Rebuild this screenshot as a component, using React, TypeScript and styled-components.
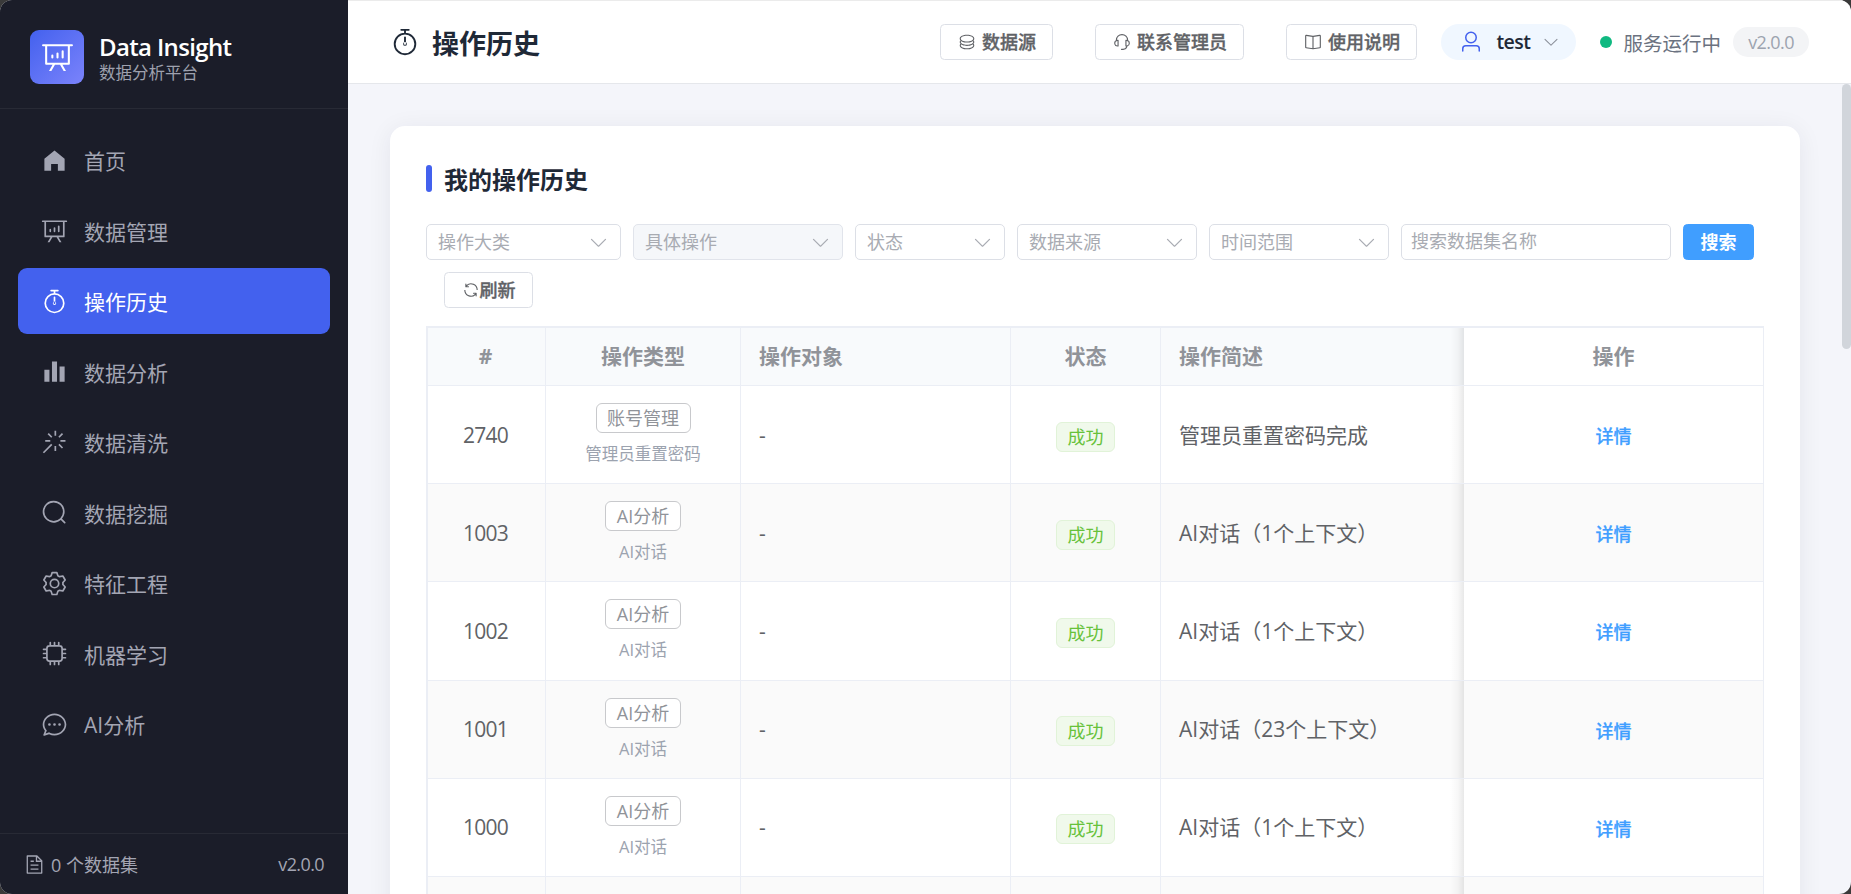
import React from "react";
import styled, { createGlobalStyle, css } from "styled-components";

const GlobalStyle = createGlobalStyle`
  * { box-sizing: border-box; }
  body {
    margin: 0;
    background: #3a3a3a;
    font-family: "Open Sans", "Noto Sans CJK SC", sans-serif;
    -webkit-font-smoothing: antialiased;
  }
  button, input { font-family: inherit; }
`;

/* ---------- icons ---------- */

const paths = {
  home: "M512 128 128 447.936V896h255.936V640H640v256h255.936V447.936z",
  board:
    "m665.216 768 110.848 192h-73.856L591.36 768H433.024L322.176 960H248.32l110.848-192H160a32 32 0 0 1-32-32V192H64a32 32 0 0 1 0-64h896a32 32 0 1 1 0 64h-64v544a32 32 0 0 1-32 32zM832 192H192v512h640zM352 448a32 32 0 0 1 32 32v64a32 32 0 0 1-64 0v-64a32 32 0 0 1 32-32m160-64a32 32 0 0 1 32 32v128a32 32 0 0 1-64 0V416a32 32 0 0 1 32-32m160-64a32 32 0 0 1 32 32v192a32 32 0 1 1-64 0V352a32 32 0 0 1 32-32",
  timer:
    "M512 896a320 320 0 1 0 0-640 320 320 0 0 0 0 640m0 64a384 384 0 1 1 0-768 384 384 0 0 1 0 768M512 320a32 32 0 0 1 32 32l-.512 224a32 32 0 1 1-64 0L480 352a32 32 0 0 1 32-32M448 576a64 64 0 1 0 128 0 64 64 0 1 0-128 0m96-448v128h-64V128h-96a32 32 0 0 1 0-64h256a32 32 0 1 1 0 64z",
  bars: "M416 896V128h192v768zm-288 0V448h192v448zm576 0V320h192v576z",
  magic:
    "M512 64h64v192h-64zm0 576h64v192h-64zM160 480v-64h192v64zm576 0v-64h192v64zM249.856 199.04l45.248-45.184L430.848 289.6 385.6 334.848 249.856 199.104zM657.152 606.4l45.248-45.248 135.744 135.744-45.248 45.248zM114.048 923.2 68.8 877.952l316.8-316.8 45.248 45.248zM702.4 334.848 657.152 289.6l135.744-135.744 45.248 45.248z",
  search:
    "m795.904 750.72 124.992 124.928a32 32 0 0 1-45.248 45.248L750.656 795.904a416 416 0 1 1 45.248-45.248zM480 832a352 352 0 1 0 0-704 352 352 0 0 0 0 704",
  setting:
    "M600.704 64a32 32 0 0 1 30.464 22.208l35.2 109.376c14.784 7.232 28.928 15.36 42.432 24.512l112.384-24.192a32 32 0 0 1 34.432 15.36L944.32 364.8a32 32 0 0 1-4.032 37.504l-77.12 85.12a357.12 357.12 0 0 1 0 49.024l77.12 85.248a32 32 0 0 1 4.032 37.504l-88.704 153.6a32 32 0 0 1-34.432 15.296L708.8 803.904c-13.44 9.088-27.648 17.28-42.368 24.512l-35.264 109.376A32 32 0 0 1 600.704 960H423.296a32 32 0 0 1-30.464-22.208L357.696 828.48a351.616 351.616 0 0 1-42.56-24.64l-112.32 24.256a32 32 0 0 1-34.432-15.36L79.68 659.2a32 32 0 0 1 4.032-37.504l77.12-85.248a357.12 357.12 0 0 1 0-48.896l-77.12-85.248A32 32 0 0 1 79.68 364.8l88.704-153.6a32 32 0 0 1 34.432-15.296l112.32 24.256c13.568-9.152 27.776-17.408 42.56-24.64l35.2-109.312A32 32 0 0 1 423.232 64H600.64zm-23.424 64H446.72l-36.352 113.088-24.512 11.968a294.113 294.113 0 0 0-34.816 20.096l-22.656 15.36-116.224-25.088-65.28 113.152 79.68 88.192-1.92 27.136a293.12 293.12 0 0 0 0 40.192l1.92 27.136-79.808 88.192 65.344 113.152 116.224-25.024 22.656 15.296a294.113 294.113 0 0 0 34.816 20.096l24.512 11.968L446.72 896h130.688l36.48-113.152 24.448-11.904a288.282 288.282 0 0 0 34.752-20.096l22.592-15.296 116.288 25.024 65.28-113.152-79.744-88.192 1.92-27.136a293.12 293.12 0 0 0 0-40.256l-1.92-27.136 79.808-88.128-65.344-113.152-116.288 24.96-22.592-15.232a287.616 287.616 0 0 0-34.752-20.096l-24.448-11.904L577.344 128zM512 320a192 192 0 1 1 0 384 192 192 0 0 1 0-384m0 64a128 128 0 1 0 0 256 128 128 0 0 0 0-256",
  cpu: "M320 256a64 64 0 0 0-64 64v384a64 64 0 0 0 64 64h384a64 64 0 0 0 64-64V320a64 64 0 0 0-64-64zm0-64h384a128 128 0 0 1 128 128v384a128 128 0 0 1-128 128H320a128 128 0 0 1-128-128V320a128 128 0 0 1 128-128M512 64a32 32 0 0 1 32 32v128h-64V96a32 32 0 0 1 32-32m160 0a32 32 0 0 1 32 32v128h-64V96a32 32 0 0 1 32-32m-320 0a32 32 0 0 1 32 32v128h-64V96a32 32 0 0 1 32-32m160 896a32 32 0 0 1-32-32V800h64v128a32 32 0 0 1-32 32m160 0a32 32 0 0 1-32-32V800h64v128a32 32 0 0 1-32 32m-320 0a32 32 0 0 1-32-32V800h64v128a32 32 0 0 1-32 32M64 512a32 32 0 0 1 32-32h128v64H96a32 32 0 0 1-32-32m0-160a32 32 0 0 1 32-32h128v64H96a32 32 0 0 1-32-32m0 320a32 32 0 0 1 32-32h128v64H96a32 32 0 0 1-32-32m896-160a32 32 0 0 1-32 32H800v-64h128a32 32 0 0 1 32 32m0-160a32 32 0 0 1-32 32H800v-64h128a32 32 0 0 1 32 32m0 320a32 32 0 0 1-32 32H800v-64h128a32 32 0 0 1 32 32",
  chat: "m174.72 855.68 135.296-45.12 23.68 11.84C388.096 849.536 448.576 864 512 864c211.84 0 384-166.784 384-352S723.84 160 512 160 128 326.784 128 512c0 69.12 24.96 139.264 70.848 199.232l22.08 28.8-46.272 115.584zm-45.248 82.56A32 32 0 0 1 89.6 896l58.368-145.92C94.72 680.32 64 596.864 64 512 64 299.904 256 96 512 96s448 203.904 448 416-192 416-448 416a461.056 461.056 0 0 1-206.912-48.384l-175.616 58.56zM512 563.2a51.2 51.2 0 1 1 0-102.4 51.2 51.2 0 0 1 0 102.4m192 0a51.2 51.2 0 1 1 0-102.4 51.2 51.2 0 0 1 0 102.4m-384 0a51.2 51.2 0 1 1 0-102.4 51.2 51.2 0 0 1 0 102.4",
  document:
    "M832 384H576V128H192v768h640zm-26.496-64L640 154.496V320zM160 64h480l256 256v608a32 32 0 0 1-32 32H160a32 32 0 0 1-32-32V96a32 32 0 0 1 32-32m160 448h384v64H320zm0-192h160v64H320zm0 384h384v64H320z",
  coin: "m161.92 580.736 29.888 58.88C171.328 659.776 160 681.728 160 704c0 82.304 155.328 160 352 160s352-77.696 352-160c0-22.272-11.392-44.16-31.808-64.32l30.464-58.432C903.936 615.808 928 657.664 928 704c0 129.728-188.544 224-416 224S96 833.728 96 704c0-46.592 24.32-88.576 65.92-123.264zM161.92 388.736l29.888 58.88C171.328 467.84 160 489.792 160 512c0 82.304 155.328 160 352 160s352-77.696 352-160c0-22.272-11.392-44.16-31.808-64.32l30.464-58.432C903.936 423.808 928 465.664 928 512c0 129.728-188.544 224-416 224S96 641.728 96 512c0-46.592 24.32-88.576 65.92-123.264zM512 544c-227.456 0-416-94.272-416-224S284.544 96 512 96s416 94.272 416 224-188.544 224-416 224m0-64c196.672 0 352-77.696 352-160S708.672 160 512 160s-352 77.696-352 160 155.328 160 352 160",
  service:
    "M864 409.6a192 192 0 0 1-37.888 349.44A256.064 256.064 0 0 1 576 960h-96a32 32 0 1 1 0-64h96a192.064 192.064 0 0 0 181.12-128H736a32 32 0 0 1-32-32V416a32 32 0 0 1 32-32h32c10.368 0 20.544.832 30.528 2.432a288 288 0 0 0-573.056 0A193.235 193.235 0 0 1 256 384h32a32 32 0 0 1 32 32v320a32 32 0 0 1-32 32h-32a192 192 0 0 1-96-358.4 352 352 0 0 1 704 0M256 448a128 128 0 1 0 0 256zm640 128a128 128 0 0 0-128-128v256a128 128 0 0 0 128-128",
  reading:
    "m512 863.36 384-54.848v-638.72L525.568 222.72a96 96 0 0 1-27.136 0L128 169.792v638.72zM137.024 106.432l370.432 52.928a32 32 0 0 0 9.088 0l370.432-52.928A64 64 0 0 1 960 169.792v638.72a64 64 0 0 1-54.976 63.36l-388.48 55.488a32 32 0 0 1-9.088 0l-388.48-55.488A64 64 0 0 1 64 808.512v-638.72a64 64 0 0 1 73.024-63.36zM480 192h64v704h-64z",
  user: "M512 512a192 192 0 1 0 0-384 192 192 0 0 0 0 384m0 64a256 256 0 1 1 0-512 256 256 0 0 1 0 512m320 320v-96a96 96 0 0 0-96-96H288a96 96 0 0 0-96 96v96a32 32 0 1 1-64 0v-96a160 160 0 0 1 160-160h448a160 160 0 0 1 160 160v96a32 32 0 1 1-64 0",
  arrow:
    "M831.872 340.864 512 652.672 192.128 340.864a30.592 30.592 0 0 0-42.752 0 29.12 29.12 0 0 0 0 41.6L489.664 714.24a32 32 0 0 0 44.672 0l340.288-331.712a29.12 29.12 0 0 0 0-41.728 30.592 30.592 0 0 0-42.752 0z",
  refresh:
    "M771.776 794.88A384 384 0 0 1 128 512h64a320 320 0 0 0 555.712 216.448H654.72a32 32 0 1 1 0-64h149.056a32 32 0 0 1 32 32v148.928a32 32 0 1 1-64 0v-50.56zM276.288 295.616h92.992a32 32 0 0 1 0 64H220.16a32 32 0 0 1-32-32V178.56a32 32 0 0 1 64 0v50.56A384 384 0 0 1 896.128 512h-64a320 320 0 0 0-555.776-216.384z",
};

type IconName = keyof typeof paths;

const Svg = styled.svg`
  display: block;
  flex: none;
  fill: currentColor;
`;

const Icon = ({ name, size }: { name: IconName; size: number }) => (
  <Svg viewBox="0 0 1024 1024" width={size} height={size}>
    <path d={paths[name]} />
  </Svg>
);

/* ---------- shell ---------- */

const Window = styled.div`
  display: flex;
  width: 1851px;
  height: 894px;
  overflow: hidden;
  border-radius: 12px;
  background: #f4f5fa;
`;

const Sidebar = styled.aside`
  display: flex;
  flex-direction: column;
  flex: none;
  width: 348px;
  background: #1b1d29;
`;

const Brand = styled.div`
  display: flex;
  align-items: center;
  gap: 15px;
  height: 109px;
  padding: 5px 30px 0;
  border-bottom: 1px solid #282a35;
`;

const BrandMark = styled.div`
  display: flex;
  align-items: center;
  justify-content: center;
  width: 54px;
  height: 54px;
  border-radius: 9px;
  color: #fff;
  background: linear-gradient(135deg, #4361ee, #7b83fb);
`;

const BrandText = styled.div`
  padding-top: 5px;
`;

const BrandName = styled.div`
  font-size: 24px;
  font-weight: 600;
  line-height: 28px;
  letter-spacing: -0.65px;
  white-space: nowrap;
  color: #fff;
`;

const BrandSub = styled.div`
  font-size: 16.5px;
  line-height: 24px;
  color: #9ea1ae;
`;

const Nav = styled.nav`
  display: flex;
  flex-direction: column;
  gap: 4.5px;
  flex: 1;
  padding: 18px;
`;

const NavItem = styled.div<{ $active?: boolean }>`
  display: flex;
  align-items: center;
  gap: 16px;
  height: 66px;
  padding: 0 23px;
  border-radius: 9px;
  font-size: 21px;
  color: ${(p) => (p.$active ? "#fff" : "#a3a5b3")};
  background: ${(p) => (p.$active ? "#4361ee" : "transparent")};
`;

const SideFooter = styled.div`
  display: flex;
  align-items: center;
  justify-content: space-between;
  height: 61px;
  padding: 0 24px;
  border-top: 1px solid #282a35;
  font-size: 18px;
  color: #a3a5b3;
`;

const DataCount = styled.span`
  display: flex;
  align-items: center;
  gap: 6px;
`;

const Version = styled.span`
  letter-spacing: -0.6px;
`;

const Main = styled.main`
  display: flex;
  flex-direction: column;
  flex: 1;
  min-width: 0;
`;

const TopBar = styled.header`
  display: flex;
  align-items: center;
  flex: none;
  height: 84px;
  padding: 0 42px;
  border-top: 1px solid #ebebeb;
  border-bottom: 1px solid #e5e7eb;
  background: #fff;
`;

const PageTitle = styled.h1`
  display: flex;
  align-items: center;
  gap: 12px;
  margin: 0 auto 0 0;
  font-size: 27px;
  font-weight: 700;
  color: #1f2937;
`;

const HeaderActions = styled.div`
  display: flex;
  gap: 42px;
  margin-right: 24px;
`;

const Button = styled.button<{ $primary?: boolean; $gap?: number }>`
  display: flex;
  align-items: center;
  justify-content: center;
  gap: ${(p) => p.$gap ?? 0}px;
  height: 36px;
  padding: 0 16.5px 1px;
  border: 1px solid #dcdfe6;
  border-radius: 4.5px;
  font-size: 18px;
  font-weight: 500;
  line-height: 20px;
  white-space: nowrap;
  color: #606266;
  -webkit-text-stroke: 0.35px currentColor;
  background: #fff;
  ${(p) =>
    p.$primary &&
    css`
      color: #fff;
      font-weight: 700;
      -webkit-text-stroke: 0;
      border-color: #409eff;
      background: #409eff;
    `}
`;

const UserPill = styled.div`
  display: flex;
  align-items: center;
  width: 135px;
  height: 36px;
  padding: 0 18px;
  border-radius: 18px;
  color: #4361ee;
  background: #f0f7ff;
`;

const UserName = styled.span`
  margin: 0 12px 0 13px;
  font-size: 19.5px;
  font-weight: 600;
  line-height: 26px;
  letter-spacing: -0.6px;
  color: #1f2937;
`;

const Muted = styled.span`
  color: #8a8f99;
`;

const StatusDot = styled.span`
  width: 12px;
  height: 12px;
  margin: 0 11px 0 24px;
  border-radius: 50%;
  background: #10b981;
`;

const StatusText = styled.span`
  font-size: 19.5px;
  color: #6b7280;
`;

const VersionPill = styled.span`
  margin-left: 12px;
  width: 76px;
  height: 30px;
  border-radius: 15px;
  font-size: 18px;
  line-height: 30px;
  letter-spacing: -0.6px;
  text-align: center;
  color: #9ca3af;
  background: #f3f4f6;
`;

const Content = styled.div`
  display: flex;
  justify-content: space-between;
  flex: 1;
  min-height: 0;
  overflow: hidden;
  padding-left: 42px;
`;

const ScrollThumb = styled.div`
  width: 9px;
  height: 265px;
  border-radius: 4.5px;
  background: #d1d5db;
`;

const Card = styled.section`
  width: 1410px;
  height: 900px;
  margin-top: 42px;
  padding: 36px;
  border-radius: 15px;
  background: #fff;
  box-shadow: 0 3px 24px rgba(20, 25, 50, 0.07);
`;

const CardTitle = styled.h2`
  display: flex;
  align-items: center;
  gap: 12px;
  height: 36px;
  margin: 0 0 26px;
  font-size: 24px;
  font-weight: 700;
  line-height: 36px;
  color: #1f2937;

  &::before {
    content: "";
    width: 6px;
    height: 27px;
    margin-bottom: 3px;
    border-radius: 3px;
    background: #4361ee;
  }
`;

/* ---------- filters ---------- */

const Filters = styled.div`
  display: flex;
  flex-wrap: wrap;
  gap: 12px;
  margin-bottom: 18px;
`;

const Select = styled.div<{ $width: number; $disabled?: boolean }>`
  display: flex;
  align-items: center;
  justify-content: space-between;
  width: ${(p) => p.$width}px;
  height: 36px;
  padding: 0 11px;
  border: 1px solid ${(p) => (p.$disabled ? "#e1e4eb" : "#dcdfe6")};
  border-radius: 5px;
  font-size: 18px;
  line-height: 24px;
  color: #a8abb2;
  background: ${(p) => (p.$disabled ? "#f5f7fa" : "#fff")};
`;

const SearchInput = styled.input`
  width: 270px;
  height: 36px;
  padding: 0 9px 2px;
  border: 1px solid #dcdfe6;
  border-radius: 5px;
  font-size: 18px;
  background: #fff;

  &::placeholder {
    color: #a8abb2;
    opacity: 1;
  }
`;

const RefreshSlot = styled.div`
  margin-left: 18px;
`;

/* ---------- table ---------- */

const Table = styled.div`
  border-top: 2px solid #ebeef5;
  border-left: 2px solid #ebeef5;
`;

const rowGrid = css`
  display: grid;
  grid-template-columns: 118px 195px 270px 150px 303px 300px;
  border-bottom: 1px solid #ebeef5;
`;

const Cell = styled.div<{ $center?: boolean }>`
  display: flex;
  flex-direction: column;
  justify-content: center;
  align-items: ${(p) => (p.$center ? "center" : "flex-start")};
  padding: 0 18px;
  border-right: 1px solid #ebeef5;
  line-height: 30px;
  white-space: nowrap;
`;

const HeadRow = styled.div`
  ${rowGrid}
  height: 58px;
  font-size: 21px;
  font-weight: 700;
  color: #909399;
  background: #f8fafc;

  & > ${Cell} {
    padding-bottom: 2px;
  }
`;

const Row = styled.div<{ $striped: boolean }>`
  ${rowGrid}
  height: 98.2px;
  font-size: 21px;
  color: #606266;
  background: ${(p) => (p.$striped ? "#fafafa" : "#fff")};
`;

const IdCell = styled(Cell)`
  padding: 0 19px 0 17px;
`;

const ShadedCell = styled(Cell)`
  border-right: none;
  background: linear-gradient(to left, rgba(0, 0, 0, 0.09), rgba(0, 0, 0, 0.03) 6px, transparent 14px);
`;

const ActionHead = styled(Cell)`
  background: #fff;
`;

const IdText = styled.span`
  letter-spacing: -0.7px;
`;

const TypeTag = styled.span`
  height: 30px;
  padding: 0 10.5px;
  border: 1px solid #c8c9cc;
  border-radius: 6px;
  font-size: 18px;
  line-height: 28px;
  color: #909399;
  background: #fff;
`;

const TypeSub = styled.span`
  margin-top: 8px;
  font-size: 16.5px;
  line-height: 25px;
  color: #9ca3af;
`;

const SuccessTag = styled.span`
  height: 30px;
  margin-top: 4px;
  padding: 0 10.5px;
  border: 1px solid #e1f3d8;
  border-radius: 6px;
  font-size: 18px;
  line-height: 28px;
  color: #67c23a;
  background: #f0f9eb;
`;

const DetailLink = styled.a`
  margin-top: 3px;
  font-size: 18px;
  font-weight: 500;
  color: #409eff;
  -webkit-text-stroke: 0.25px currentColor;
`;

/* ---------- data ---------- */

const navItems: { icon: IconName; label: string; active?: boolean }[] = [
  { icon: "home", label: "首页" },
  { icon: "board", label: "数据管理" },
  { icon: "timer", label: "操作历史", active: true },
  { icon: "bars", label: "数据分析" },
  { icon: "magic", label: "数据清洗" },
  { icon: "search", label: "数据挖掘" },
  { icon: "setting", label: "特征工程" },
  { icon: "cpu", label: "机器学习" },
  { icon: "chat", label: "AI分析" },
];

const headerButtons: { icon: IconName; label: string }[] = [
  { icon: "coin", label: "数据源" },
  { icon: "service", label: "联系管理员" },
  { icon: "reading", label: "使用说明" },
];

const selects = [
  { label: "操作大类", width: 195 },
  { label: "具体操作", width: 210, disabled: true },
  { label: "状态", width: 150 },
  { label: "数据来源", width: 180 },
  { label: "时间范围", width: 180 },
];

const rows = [
  { id: "2740", type: "账号管理", sub: "管理员重置密码", desc: "管理员重置密码完成" },
  { id: "1003", type: "AI分析", sub: "AI对话", desc: "AI对话（1个上下文）" },
  { id: "1002", type: "AI分析", sub: "AI对话", desc: "AI对话（1个上下文）" },
  { id: "1001", type: "AI分析", sub: "AI对话", desc: "AI对话（23个上下文）" },
  { id: "1000", type: "AI分析", sub: "AI对话", desc: "AI对话（1个上下文）" },
];

export default function App() {
  return (
    <>
      <GlobalStyle />
      <Window>
        <Sidebar>
          <Brand>
            <BrandMark>
              <Icon name="board" size={33} />
            </BrandMark>
            <BrandText>
              <BrandName>Data Insight</BrandName>
              <BrandSub>数据分析平台</BrandSub>
            </BrandText>
          </Brand>
          <Nav>
            {navItems.map((n) => (
              <NavItem key={n.label} $active={n.active}>
                <Icon name={n.icon} size={27} />
                {n.label}
              </NavItem>
            ))}
          </Nav>
          <SideFooter>
            <DataCount>
              <Icon name="document" size={21} />
              0 个数据集
            </DataCount>
            <Version>v2.0.0</Version>
          </SideFooter>
        </Sidebar>

        <Main>
          <TopBar>
            <PageTitle>
              <Icon name="timer" size={30} />
              操作历史
            </PageTitle>
            <HeaderActions>
              {headerButtons.map((b) => (
                <Button key={b.label} $gap={6}>
                  <Icon name={b.icon} size={18} />
                  {b.label}
                </Button>
              ))}
            </HeaderActions>
            <UserPill>
              <Icon name="user" size={24} />
              <UserName>test</UserName>
              <Muted>
                <Icon name="arrow" size={18} />
              </Muted>
            </UserPill>
            <StatusDot />
            <StatusText>服务运行中</StatusText>
            <VersionPill>v2.0.0</VersionPill>
          </TopBar>

          <Content>
            <Card>
              <CardTitle>我的操作历史</CardTitle>
              <Filters>
                {selects.map((s) => (
                  <Select key={s.label} $width={s.width} $disabled={s.disabled}>
                    {s.label}
                    <Icon name="arrow" size={21} />
                  </Select>
                ))}
                <SearchInput placeholder="搜索数据集名称" />
                <Button $primary>搜索</Button>
                <RefreshSlot>
                  <Button>
                    <Icon name="refresh" size={18} />
                    刷新
                  </Button>
                </RefreshSlot>
              </Filters>

              <Table>
                <HeadRow>
                  <IdCell $center>#</IdCell>
                  <Cell $center>操作类型</Cell>
                  <Cell>操作对象</Cell>
                  <Cell $center>状态</Cell>
                  <ShadedCell>操作简述</ShadedCell>
                  <ActionHead $center>操作</ActionHead>
                </HeadRow>
                {rows.map((r, i) => (
                  <Row key={r.id} $striped={i % 2 === 1}>
                    <IdCell $center>
                      <IdText>{r.id}</IdText>
                    </IdCell>
                    <Cell $center>
                      <TypeTag>{r.type}</TypeTag>
                      <TypeSub>{r.sub}</TypeSub>
                    </Cell>
                    <Cell>-</Cell>
                    <Cell $center>
                      <SuccessTag>成功</SuccessTag>
                    </Cell>
                    <ShadedCell>{r.desc}</ShadedCell>
                    <Cell $center>
                      <DetailLink>详情</DetailLink>
                    </Cell>
                  </Row>
                ))}
                <Row $striped>
                  <Cell />
                  <Cell />
                  <Cell />
                  <Cell />
                  <ShadedCell />
                  <Cell />
                </Row>
              </Table>
            </Card>
            <ScrollThumb />
          </Content>
        </Main>
      </Window>
    </>
  );
}
